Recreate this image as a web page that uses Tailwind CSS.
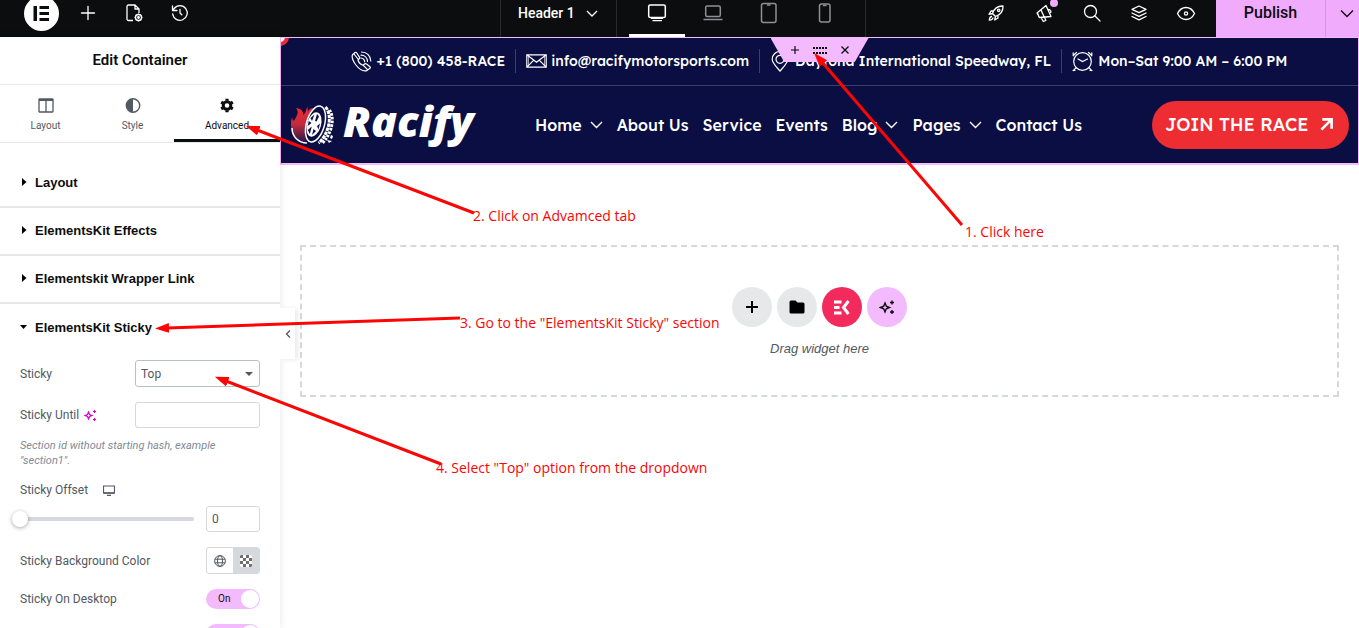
<!DOCTYPE html>
<html lang="en">
<head>
    <meta charset="UTF-8">
    <meta name="viewport" content="width=device-width, initial-scale=1.0">
    <title>Edit Container - Header 1</title>
    <script src="https://cdn.jsdelivr.net/npm/@tailwindcss/browser@4"></script>
</head>
<body class="relative h-screen overflow-hidden flex flex-col bg-white font-[Roboto,sans-serif] text-[#515962]">

    <!-- Editor top bar -->
    <header class="flex h-[37px] shrink-0 bg-[#0c0d0e] text-white">
        <div class="flex w-[500px] shrink-0 items-center gap-[22px] pl-6 pb-[11px]">
            <button aria-label="Elementor menu" class="-mr-[5px] shrink-0">
                <svg width="35" height="35" viewBox="0 0 35 35"><circle cx="17.500" cy="17.500" r="17.500" fill="#fff"/><path fill="#0c0d0e" d="M9.500 10h3.500v15H9.500zM15.500 10h9.500v3h-9.500zM15.500 16h9.500v3h-9.500zM15.500 22h9.500v3h-9.500z"/></svg>
            </button>
            <button aria-label="Add element"><svg width="24" height="24" viewBox="0 0 24 24" fill="none" stroke="#fff" stroke-width="1.300"><path d="M12 5.500v13M5.500 12h13" stroke-linecap="round"/></svg></button>
            <button aria-label="Page settings"><svg width="24" height="24" viewBox="0 0 24 24" fill="none" stroke="#fff" stroke-width="1.300" stroke-linejoin="round"><path d="M11 19.500H6.500a1.500 1.500 0 0 1-1.500-1.500V5.500A1.500 1.500 0 0 1 6.500 4H13l4 4v4M13 4v4h4"/><circle cx="16.500" cy="16.500" r="3"/><circle cx="16.500" cy="16.500" r=".8" fill="#fff"/><path d="M16.500 12.500v1M16.500 19.500v1M12.500 16.500h1M19.500 16.500h1M13.700 13.700l.7.7M18.600 18.600l.7.7M19.300 13.700l-.7.7M14.400 18.600l-.7.7"/></svg></button>
            <button aria-label="History"><svg width="24" height="24" viewBox="0 0 24 24" fill="none" stroke="#fff" stroke-width="1.300" stroke-linecap="round" stroke-linejoin="round"><path d="M4.700 13a7.300 7.300 0 1 0 1.500-5.500L4.500 9.500M4.500 5v4.500H9M12 8.500V12l1.800 1.800"/></svg></button>
        </div>
        <div class="flex shrink-0 border-x border-[#2a2b2d]">
            <button class="flex w-[115px] items-center justify-between pl-[17px] pr-4 pb-[11px] text-sm font-medium">
                Header 1
                <svg width="16" height="16" viewBox="0 0 16 16" fill="none" stroke="#fff" stroke-width="1.300"><path d="M3 6l5 5 5-5"/></svg>
            </button>
            <div class="flex border-l border-[#2a2b2d] pl-3 pr-3">
                <button aria-label="Desktop" class="flex w-14 items-center justify-center border-b-[3px] border-white pb-2"><svg width="24" height="24" viewBox="0 0 24 24" fill="none" stroke="#fff" stroke-width="1.500"><rect x="3.700" y="4" width="16.600" height="12.500" rx="1.500"/><path d="M6 17.300h12M7.500 19.700h9.500" stroke-width="1.300"/></svg></button>
                <button aria-label="Laptop" class="flex w-14 items-center justify-center pb-[11px]"><svg width="24" height="24" viewBox="0 0 24 24" fill="none" stroke="#8f9093" stroke-width="1.500"><rect x="4.700" y="5" width="14.600" height="10.500" rx="1.500"/><path d="M2.500 18.500h19"/></svg></button>
                <button aria-label="Tablet" class="flex w-14 items-center justify-center pb-[11px]"><svg width="24" height="24" viewBox="0 0 24 24" fill="none" stroke="#8f9093" stroke-width="1.500"><rect x="4.500" y="2.500" width="14.500" height="19" rx="2"/><path d="M10 4h3.500" /></svg></button>
                <button aria-label="Mobile" class="flex w-14 items-center justify-center pb-[11px]"><svg width="24" height="24" viewBox="0 0 24 24" fill="none" stroke="#8f9093" stroke-width="1.500"><rect x="6.500" y="3" width="10.500" height="18" rx="2"/><path d="M10 4.500h3.500"/></svg></button>
            </div>
        </div>
        <div class="ml-auto flex">
            <div class="flex items-center gap-[23px] pr-[18px] pb-[11px]">
                <button aria-label="What's new"><svg width="24" height="24" viewBox="0 0 24 24" fill="none" stroke="#fff" stroke-width="1.300" stroke-linejoin="round"><path d="M6.500 12.500C8 8 11.500 4.800 17 5c.2 5.500-3 9-7.500 10.500zM7.500 10H5l-2 3.300 3.500-.8M12 14.500V17l-3.300 2 .8-3.500M6 15.500c-2 0-2.500 1.500-2.700 3.700C5.500 19 7 18.500 7 16.500"/><circle cx="12.700" cy="9.300" r="1.200"/></svg></button>
                <button aria-label="Announcements" class="relative"><svg width="24" height="24" viewBox="0 0 24 24" fill="none" stroke="#fff" stroke-width="1.300" stroke-linejoin="round"><path d="M4 12l9-7.500 5 11-11.500 1zM8 9l3.200 7M4.500 12l1.700 4.500M8 16.500l2.300 4 2.500-1L11.500 16M15.500 8.500c2 0 3 2 2 3.500"/></svg><span class="absolute right-[-1px] top-[-2px] size-2 rounded-full bg-[#f0abfc]"></span></button>
                <button aria-label="Search"><svg width="24" height="24" viewBox="0 0 24 24" fill="none" stroke="#fff" stroke-width="1.300" stroke-linecap="round"><circle cx="10.500" cy="10.500" r="6"/><path d="M15 15l5 5"/></svg></button>
                <button aria-label="Structure"><svg width="24" height="24" viewBox="0 0 24 24" fill="none" stroke="#fff" stroke-width="1.300" stroke-linejoin="round" stroke-linecap="round"><path d="M12 5l7 3.300-7 3.300-7-3.300zM5 12l7 3.300 7-3.300M5 15.500l7 3.300 7-3.300"/></svg></button>
                <button aria-label="Preview"><svg width="24" height="24" viewBox="0 0 24 24" fill="none" stroke="#fff" stroke-width="1.300"><path d="M3.500 12.500C5.500 8.500 8.500 6.500 12 6.500s6.500 2 8.500 6c-2 4-5 6-8.500 6s-6.500-2-8.500-6z"/><circle cx="12" cy="12.500" r="1.600"/></svg></button>
            </div>
            <div class="flex bg-[#f0abfc] text-[#0c0d0e]">
                <button class="w-[110px] border-r border-[#e08df2] pb-[11px] text-base font-medium">Publish</button>
                <button aria-label="Save options" class="flex w-[33px] items-center justify-end pb-[11px] pr-1"><svg width="16" height="16" viewBox="0 0 16 16" fill="none" stroke="#0c0d0e" stroke-width="1.300"><path d="M2 5.500l6 6 6-6"/></svg></button>
            </div>
        </div>
    </header>

    <div class="flex min-h-0 flex-1">

        <!-- Settings panel -->
        <aside class="relative z-10 w-[280px] shrink-0 bg-white shadow-[0_0_8px_rgba(0,0,0,0.1)]">
            <h1 class="flex h-12 items-center justify-center border-b border-[#e6e8ea] text-[15px] font-semibold text-[#0c0d0e]">Edit Container</h1>
            <nav class="flex h-[58px] border-b border-[#e6e8ea] text-[10px] leading-3">
                <button class="flex w-[91px] flex-col items-center gap-[7px] pt-3"><svg width="16" height="16" viewBox="0 0 16 16" fill="none" stroke="#515962" stroke-width="1.300"><rect x="1" y="2" width="14" height="13" rx=".5"/><path d="M1 3h14" stroke-width="2"/><path d="M8 2v13"/></svg>Layout</button>
                <button class="flex w-[83px] flex-col items-center gap-[7px] pt-3"><svg width="16" height="16" viewBox="0 0 16 16"><circle cx="8" cy="8.500" r="6.700" fill="none" stroke="#515962" stroke-width="1.400"/><path d="M8 2a6.500 6.500 0 0 0 0 13z" fill="#515962"/></svg>Style</button>
                <button class="flex flex-1 flex-col items-center gap-[7px] border-b-[3px] border-[#0c0d0e] pt-3 text-[#0c0d0e]"><svg width="16" height="16" viewBox="0 0 16 16" fill="none" stroke="#0c0d0e"><circle cx="8" cy="8.500" r="3.800" stroke-width="3"/><path d="M8 1.800v2M8 13.200v2M2.200 5.150l1.700 1M12.100 10.850l1.700 1M13.800 5.150l-1.700 1M3.900 10.850l-1.700 1" stroke-width="3.200"/></svg>Advanced</button>
            </nav>

            <div class="pt-[17px] font-['Liberation_Sans',sans-serif] text-[13px] font-bold text-[#0c0d0e]">
                <button class="flex h-12 w-full items-center gap-2 border-b-2 border-[#e6e8ea] pl-5"><svg class="mb-[3px]" width="7" height="8" viewBox="0 0 7 8"><path d="M2 0l4.500 4L2 8z"/></svg>Layout</button>
                <button class="flex h-12 w-full items-center gap-2 border-b-2 border-[#e6e8ea] pl-5"><svg class="mb-[3px]" width="7" height="8" viewBox="0 0 7 8"><path d="M2 0l4.500 4L2 8z"/></svg>ElementsKit Effects</button>
                <button class="flex h-12 w-full items-center gap-2 border-b-2 border-[#e6e8ea] pl-5"><svg class="mb-[3px]" width="7" height="8" viewBox="0 0 7 8"><path d="M2 0l4.500 4L2 8z"/></svg>Elementskit Wrapper Link</button>
                <button class="flex h-12 w-full items-center gap-2 pl-5"><svg class="mb-[3px]" width="7" height="8" viewBox="0 0 7 8"><path d="M0 2h7L3.500 6z"/></svg>ElementsKit Sticky</button>
            </div>

            <div class="px-5 pt-2 text-xs">
                <div class="flex items-center justify-between">
                    <label for="sticky">Sticky</label>
                    <div class="relative">
                        <select id="sticky" class="block h-[27px] w-[125px] appearance-none rounded-[3px] border border-[#babfc5] px-[5px] text-xs"><option>Top</option><option>Bottom</option><option>None</option></select>
                        <svg class="pointer-events-none absolute right-[7px] top-3" width="8" height="4" viewBox="0 0 8 4"><path fill="#515962" d="M0 0h8L4 4z"/></svg>
                    </div>
                </div>
                <div class="mt-[15px] flex items-center justify-between">
                    <label for="until" class="flex items-center gap-[5px]">Sticky Until <svg width="13" height="13" viewBox="0 0 13 13" fill="none" stroke="#d004d4"><path stroke-width="1.200" d="M4.500 3l1 2.500L8 6.500l-2.500 1-1 2.500-1-2.500L1 6.500l2.500-1z"/><path d="M10.500 1v3M9 2.500h3M10.500 9v3M9 10.500h3" stroke-width="1.200"/></svg></label>
                    <input id="until" type="text" class="h-[26px] w-[125px] rounded-[3px] border border-[#d5d8dc] px-[5px]">
                </div>
                <p class="mt-[10px] text-[11px] italic leading-[15px] text-[#818a96]">Section id without starting hash, example "section1".</p>
                <label for="offset" class="mt-[14px] flex h-4 items-center gap-[15px]">Sticky Offset <svg width="12" height="11" viewBox="0 0 12 11" fill="none" stroke="#515962"><path d="M.5 1h11v7H.5z" stroke-width="1.200"/><path d="M.5 8h11M4 10.300h4" stroke-width="1.300"/></svg></label>
                <div class="mt-2 flex items-center justify-between">
                    <input id="offset" type="range" value="0" class="-ml-2 h-[17px] w-[182px] appearance-none bg-transparent [&::-webkit-slider-runnable-track]:h-1 [&::-webkit-slider-runnable-track]:rounded-full [&::-webkit-slider-runnable-track]:bg-[#d5d8dc] [&::-webkit-slider-thumb]:-mt-[6px] [&::-webkit-slider-thumb]:size-4 [&::-webkit-slider-thumb]:appearance-none [&::-webkit-slider-thumb]:rounded-full [&::-webkit-slider-thumb]:bg-white [&::-webkit-slider-thumb]:shadow-[0_1px_4px_rgba(0,0,0,0.35)]">
                    <input aria-label="Sticky Offset value" type="text" value="0" class="h-[26px] w-[54px] rounded-[3px] border border-[#d5d8dc] px-[5px]">
                </div>
                <div class="mt-[15px] flex items-center justify-between">
                    <span>Sticky Background Color</span>
                    <div class="flex h-[27px] w-[54px] overflow-hidden rounded-[3px] border border-[#d5d8dc]">
                        <button aria-label="Global color" class="flex flex-1 items-center justify-center"><svg width="12" height="12" viewBox="0 0 12 12" fill="none" stroke="#515962"><circle cx="6" cy="6" r="5.400"/><ellipse cx="6" cy="6" rx="2.500" ry="5.400"/><path d="M1 4.200h10M1 7.800h10"/></svg></button>
                        <button aria-label="Pick color" class="flex flex-1 items-center justify-center bg-[#d5d8dc]"><svg width="12" height="12" viewBox="0 0 12 12"><rect width="12" height="12" rx="2" fill="#fff"/><path fill="#6f6f6f" d="M1 0h2v3H0V1zM6 0h3v3H6zM3 3h3v3H3zM9 3h3v3H9zM0 6h3v3H0zM6 6h3v3H6zM3 9h3v3H3zM9 9h3v2l-1 1H9z"/></svg></button>
                    </div>
                </div>
                <div class="mt-[15px] flex items-center justify-between">
                    <label for="desktop">Sticky On Desktop</label>
                    <div class="relative text-[10px] text-[#0c0d0e]">
                        <input id="desktop" type="checkbox" checked class="relative block h-5 w-[54px] appearance-none rounded-full bg-[#f3bafd] before:absolute before:right-px before:top-px before:size-[18px] before:rounded-full before:bg-white">
                        <span class="pointer-events-none absolute inset-y-0 left-3 flex items-center">On</span>
                    </div>
                </div>
                <div class="mt-[15px] flex justify-end">
                    <input aria-label="Sticky On Tablet" type="checkbox" checked class="relative block h-5 w-[54px] appearance-none rounded-full bg-[#f3bafd] before:absolute before:right-px before:top-px before:size-[18px] before:rounded-full before:bg-white">
                </div>
            </div>

            <!-- Collapse handle -->
            <button aria-label="Hide panel" class="absolute left-full top-[271px] flex h-[51px] w-[15px] items-center justify-center bg-white shadow-[3px_1px_5px_rgba(0,0,0,0.08)]"><svg width="6" height="8" viewBox="0 0 6 8" fill="none" stroke="#515962" stroke-width="1.300"><path d="M5 .5L1.500 4 5 7.500"/></svg></button>
        </aside>

        <!-- Canvas -->
        <main class="min-w-0 flex-1">
            <section class="relative overflow-hidden border border-b-2 border-[#f3bafd] bg-[#0a0e42] font-[Lexend,Inter,sans-serif] font-medium text-white">
                <div class="absolute -left-[10px] -top-[10px] size-[18px] rounded-full border-4 border-[#ee2d32] bg-white"></div>

                <div class="flex h-12 items-center justify-center gap-[10px] border-b border-[#3b3e68] pb-px whitespace-nowrap text-sm">
                    <a href="#" class="flex items-center gap-1"><svg width="21" height="21" viewBox="0 0 21 21" fill="none" stroke="#fff" stroke-width="1.200" stroke-linejoin="round" stroke-linecap="round"><path d="M4 1.500L1.500 3.700C.5 6 1.500 9 4.500 13.500c3.500 4.500 8 7 11 6.300l3.500-2.500c.5-.5.400-1 0-1.500L15.500 13c-.6-.5-1.300-.5-2 0l-1.500 1.200C10 13.500 7.500 11 7 9l1.200-1.200c.5-.5.500-1 .2-1.700L5.800 2c-.5-.7-1.200-.9-1.800-.5zM3 3l4 5M12.500 14.500l4.300 4.300M10.500 1c5 0 9 3.500 9.300 9M10 4.200c3.500 0 6.300 2.500 6.500 6.300M9.800 7c2 .2 3.700 1.500 3.900 3.800"/></svg>+1 (800) 458-RACE</a>
                    <span class="h-6 w-px bg-[#3b3e68]"></span>
                    <a href="#" class="flex items-center gap-1"><svg width="21" height="14" viewBox="0 0 21 14" fill="none" stroke="#fff" stroke-width="1.200"><path d="M.8 .8h19.400v12.400H.8zM.8 .8l9.700 7.400L20.200.8M.8 13.200l7-7M20.200 13.200l-7-7"/><path d="M2.500 2.500v9M18.500 2.500v9" stroke-width=".6"/></svg>info@racifymotorsports.com</a>
                    <span class="h-6 w-px bg-[#3b3e68]"></span>
                    <a href="#" class="flex items-center gap-[5px]"><svg width="20" height="21" viewBox="0 0 20 21" fill="none" stroke="#fff" stroke-width="1.200"><path d="M10 20C6 15.500 2.200 12 2.200 8.300a7.800 7.800 0 0 1 15.600 0C17.800 12 14 15.500 10 20z"/><circle cx="10" cy="8.300" r="4"/></svg>Daytona International Speedway, FL</a>
                    <span class="h-6 w-px bg-[#3b3e68]"></span>
                    <span class="flex items-center gap-[5px]"><svg width="21" height="21" viewBox="0 0 21 21" fill="none" stroke="#fff" stroke-width="1.200" stroke-linecap="round"><circle cx="10.500" cy="10.500" r="8.800"/><path d="M6 8l4.500 2.500L15.500 8M3.800 16.800L1.500 19.500M17.200 16.800l2.300 2.700M4.500 1.500L1.500 4.300M1.200 1.800v3M16.500 1.500l3 2.800M19.800 1.800v3M1 19.500h2M18 19.500h2"/></svg>Mon–Sat 9:00 AM – 6:00 PM</span>
                </div>

                <div class="flex h-[77px] items-center pl-[10px] pr-[9px] whitespace-nowrap">
                    <a href="#" class="flex w-[244px] items-center gap-2" aria-label="Racify home">
                        <svg class="shrink-0" width="44" height="42" viewBox="0 0 44 42">
                            <defs><linearGradient id="flame" x1="0" y1="0" x2="0" y2="1"><stop offset="0" stop-color="#f5292d"/><stop offset=".5" stop-color="#c12b3e"/><stop offset="1" stop-color="#2a1748"/></linearGradient></defs>
                            <path fill="url(#flame)" d="M17 3c-3 2-1 5-5 8 1-4-2-6-7-7 4 5 0 8-2 13-1-1-2-2-2-4-2 7-1 13 1 17 2 5 6 8 13 8l-1-14 8-20c-3 0-5 3-5 4 0-2-1-3 0-5z"/>
                            <path fill="none" stroke="#fff" stroke-width="1.500" d="M1 24c0 8 6 15 15 15"/>
                            <ellipse cx="24.500" cy="20" rx="9" ry="18.500" transform="rotate(16 24.500 20)" fill="#0a0e42" stroke="#fff" stroke-width="1.500"/>
                            <ellipse cx="23" cy="20.500" rx="7" ry="12.500" transform="rotate(16 23 20.500)" fill="#fff"/>
                            <path fill="#0a0e42" d="M23.500 10.500l-2.500 6.500-1.500-3zM26 10l2 2.500-2.500 5-1.500-.5zM17.800 17l2.700 2-3.800 3zM16.800 26l4-3.500-2 7.500zM21 31l1.500-6 2.500 2zM26 22l3-2.500-1.500 6z"/>
                            <path fill="none" stroke="#fff" stroke-width="3" stroke-dasharray="3.500 .8" d="M34.500 3c5 6 4.500 15 2 22-2 6-5 11-9 14"/>
                            <path fill="none" stroke="#fff" stroke-width="3" stroke-dasharray="2.500 1.200" d="M38.500 6c4 6 3 14 1 20-2 5-4 9-8 13"/>
                            <path fill="#fff" d="M40 31l2 1-1 3-2-1zM36 36l5 1-3 2z"/>
                        </svg>
                        <span class="pb-2 font-['Open_Sans',sans-serif] text-[43px] font-extrabold italic leading-none">Racify</span>
                    </a>
                    <nav class="flex items-center gap-[14px] text-base">
                        <a href="#" class="flex items-center gap-2">Home <svg width="13" height="8" viewBox="0 0 13 8" fill="none" stroke="#fff" stroke-width="1.400"><path d="M1 1l5.500 5.500L12 1"/></svg></a>
                        <a href="#">About Us</a>
                        <a href="#">Service</a>
                        <a href="#">Events</a>
                        <a href="#" class="flex items-center gap-2">Blog <svg width="13" height="8" viewBox="0 0 13 8" fill="none" stroke="#fff" stroke-width="1.400"><path d="M1 1l5.500 5.500L12 1"/></svg></a>
                        <a href="#" class="flex items-center gap-2">Pages <svg width="13" height="8" viewBox="0 0 13 8" fill="none" stroke="#fff" stroke-width="1.400"><path d="M1 1l5.500 5.500L12 1"/></svg></a>
                        <a href="#">Contact Us</a>
                    </nav>
                    <a href="#" class="ml-auto flex h-12 w-[197px] items-center gap-3 rounded-full bg-[#ee2d32] pl-[13px] text-lg">JOIN THE RACE <svg width="13" height="13" viewBox="0 0 14 14" fill="none" stroke="#fff" stroke-width="2.800"><path d="M2.500 1.500h10v10M12.500 1.500L1.500 12.500"/></svg></a>
                </div>

                <!-- Container handle -->
                <div class="absolute left-1/2 top-0 flex h-6 w-[98px] -translate-x-1/2 items-center justify-center gap-[11px] bg-[#f3bafd] [clip-path:polygon(0_0,100%_0,86%_100%,14%_100%)]">
                    <button aria-label="Add container"><svg width="14" height="14" viewBox="0 0 14 14" stroke="#0c0d0e" stroke-width="1.200"><path d="M7 3v8M3 7h8"/></svg></button>
                    <button aria-label="Edit container"><svg width="14" height="14" viewBox="0 0 14 14" fill="#0c0d0e"><path d="M0 4h2v2H0zM6 4h2v2H6zM12 4h2v2h-2zM3 4h2v2H3zM9 4h2v2H9zM0 9h2v2H0zM6 9h2v2H6zM12 9h2v2h-2zM3 9h2v2H3zM9 9h2v2H9z"/></svg></button>
                    <button aria-label="Delete container"><svg width="14" height="14" viewBox="0 0 14 14" stroke="#0c0d0e" stroke-width="1.300"><path d="M3.500 3.500l7 7M10.500 3.500l-7 7"/></svg></button>
                </div>
            </section>

            <div class="mx-5 mt-20 flex h-[152px] flex-col items-center justify-center gap-3 border-2 border-dashed border-[#d5d8dc] pt-1">
                <div class="flex gap-[5px]">
                    <button aria-label="Add new container" class="flex size-10 items-center justify-center rounded-full bg-[#e6e8ea]"><svg width="12" height="12" viewBox="0 0 12 12" stroke="#000" stroke-width="2"><path d="M6 0v12M0 6h12"/></svg></button>
                    <button aria-label="Add template" class="flex size-10 items-center justify-center rounded-full bg-[#e6e8ea]"><svg width="16" height="14" viewBox="0 0 16 14"><path d="M2 .5h4.500l2 2H14a1.500 1.500 0 0 1 1.500 1.500v8a1.500 1.500 0 0 1-1.500 1.500H2A1.500 1.500 0 0 1 .5 12V2A1.500 1.500 0 0 1 2 .5z"/></svg></button>
                    <button aria-label="ElementsKit" class="flex size-10 items-center justify-center rounded-full bg-[#f32a5c]"><svg width="18" height="15" viewBox="0 0 18 15" fill="none" stroke="#fff" stroke-width="3"><path d="M1 2h7.500M1 7.500h5.500M1 13h7.500"/><path d="M15.500 1L10.500 7.500l5 6.500"/></svg></button>
                    <button aria-label="Build with AI" class="flex size-10 items-center justify-center rounded-full bg-[#f3bafd]"><svg width="16" height="16" viewBox="0 0 16 16" fill="none" stroke="#0c0d0e" stroke-width="1.400"><path d="M6 4l1.300 3.200L10.500 8.500 7.300 9.800 6 13 4.700 9.800 1.500 8.500l3.200-1.300z"/><path d="M13 1.500v4M11 3.500h4M13 11v4M11 13h4"/></svg></button>
                </div>
                <p class="font-['Liberation_Sans',sans-serif] text-[13px] italic leading-5">Drag widget here</p>
            </div>
        </main>
    </div>

    <!-- Step annotations -->
    <div class="pointer-events-none absolute inset-0 z-20 font-['Open_Sans',sans-serif] text-sm leading-4 whitespace-nowrap text-[#fb0505]">
        <svg class="absolute size-full" fill="none" stroke="#fb0505" stroke-width="3">
            <defs><marker id="head" markerWidth="15" markerHeight="11" refX="2" refY="5" orient="auto" markerUnits="userSpaceOnUse"><path d="M0 0l14 5-14 5z" fill="#fb0505" stroke="none"/></marker></defs>
            <path d="M962 225L822 62" marker-end="url(#head)"/>
            <path d="M474 213L257 130" marker-end="url(#head)"/>
            <path d="M460 318L167 328" marker-end="url(#head)"/>
            <path d="M441 464L226 381" marker-end="url(#head)"/>
        </svg>
        <span class="absolute left-[965px] top-[224px]">1. Click here</span>
        <span class="absolute left-[473px] top-[208px]">2. Click on Advamced tab</span>
        <span class="absolute left-[460px] top-[315px]">3. Go to the "ElementsKit Sticky" section</span>
        <span class="absolute left-[436px] top-[460px]">4. Select "Top" option from the dropdown</span>
    </div>
</body>
</html>
